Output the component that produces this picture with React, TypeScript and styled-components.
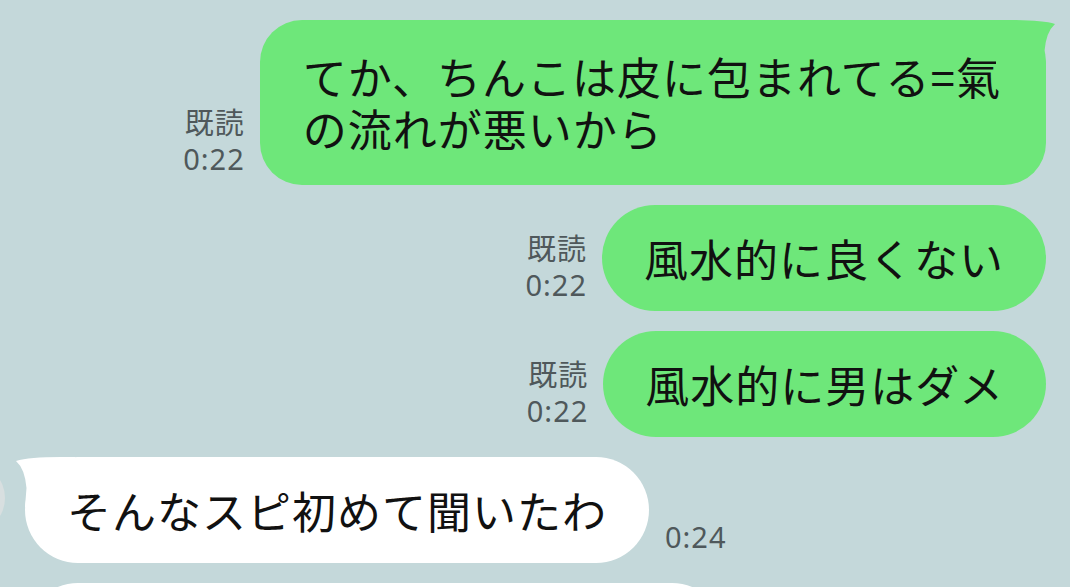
import * as React from "react"
import styled, { createGlobalStyle } from "styled-components"

const GlobalStyle = createGlobalStyle`
    html, body {
        margin: 0;
        padding: 0;
        background: #c4d8da;
    }
    body {
        font-family: "Noto Sans CJK JP", "Noto Sans", sans-serif;
    }
`

const ChatWrapper = styled.div`
    width: 1070px;
    height: 587px;
    overflow: hidden;
    box-sizing: border-box;
    padding: 20px 24px 0 0;
    background: #c4d8da;

    display: flex;
    flex-direction: column;
    gap: 20px;
`

const OutgoingRow = styled.div`
    display: flex;
    flex-direction: row;
    justify-content: flex-end;
    align-items: flex-end;
    gap: 15px;
`

const IncomingRow = styled.div`
    display: flex;
    flex-direction: row;
    align-items: flex-end;
    gap: 16px;
`

const Avatar = styled.div`
    flex: none;
    align-self: flex-start;
    width: 70px;
    height: 70px;
    margin-top: 6px;
    margin-left: -65px;
    margin-right: 4px;
    border-radius: 50%;
    background: #d8dfe0;
`

const Meta = styled.div`
    display: flex;
    flex-direction: column;
    align-items: flex-end;
    padding-bottom: 8px;
    font-family: "Noto Sans", "Noto Sans CJK JP", sans-serif;
    font-size: 29px;
    line-height: 36px;
    letter-spacing: 1px;
    color: #4f585b;
`

const Bubble = styled.div<{ $incoming?: boolean; $width?: number }>`
    position: relative;
    flex: none;
    box-sizing: border-box;
    width: ${(p) => (p.$width ? `${p.$width}px` : "auto")};
    padding: 27px 42px;
    border-radius: 53px;
    background: ${(p) => (p.$incoming ? "#ffffff" : "#6ee77a")};
    color: #111111;
    font-size: 44px;
    line-height: 52px;
    letter-spacing: 1px;
    white-space: nowrap;
`

const TallBubble = styled(Bubble)`
    padding: 30px 45px 31px 43px;
    border-radius: 42px;
`

const TailSvg = styled.svg<{ $left?: boolean }>`
    position: absolute;
    top: 0;
    width: 62px;
    height: 50px;
    ${(p) => (p.$left ? "left: -12px; transform: scaleX(-1);" : "right: -12px;")}
`

function Tail(props: { left?: boolean; color: string }) {
    return (
        <TailSvg $left={props.left} viewBox="0 0 62 50">
            <path
                d="M0 0 L14 0 Q46 0 59 4 Q50 12 48.5 31 L50 50 L0 50 Z"
                fill={props.color}
            />
        </TailSvg>
    )
}

export default function App() {
    return (
        <>
            <GlobalStyle />
            <ChatWrapper>
                <OutgoingRow>
                    <Meta>
                        <span>既読</span>
                        <span>0:22</span>
                    </Meta>
                    <TallBubble>
                        てか、ちんこは皮に包まれてる=氣
                        <br />
                        の流れが悪いから
                        <Tail color="#6ee77a" />
                    </TallBubble>
                </OutgoingRow>
                <OutgoingRow>
                    <Meta>
                        <span>既読</span>
                        <span>0:22</span>
                    </Meta>
                    <Bubble>風水的に良くない</Bubble>
                </OutgoingRow>
                <OutgoingRow>
                    <Meta>
                        <span>既読</span>
                        <span>0:22</span>
                    </Meta>
                    <Bubble>風水的に男はダメ</Bubble>
                </OutgoingRow>
                <IncomingRow>
                    <Avatar />
                    <Bubble $incoming>
                        そんなスピ初めて聞いたわ
                        <Tail left color="#ffffff" />
                    </Bubble>
                    <Meta>
                        <span>0:24</span>
                    </Meta>
                </IncomingRow>
                <IncomingRow>
                    <Avatar />
                    <Bubble $incoming $width={700}>
                        &nbsp;
                    </Bubble>
                </IncomingRow>
            </ChatWrapper>
        </>
    )
}
